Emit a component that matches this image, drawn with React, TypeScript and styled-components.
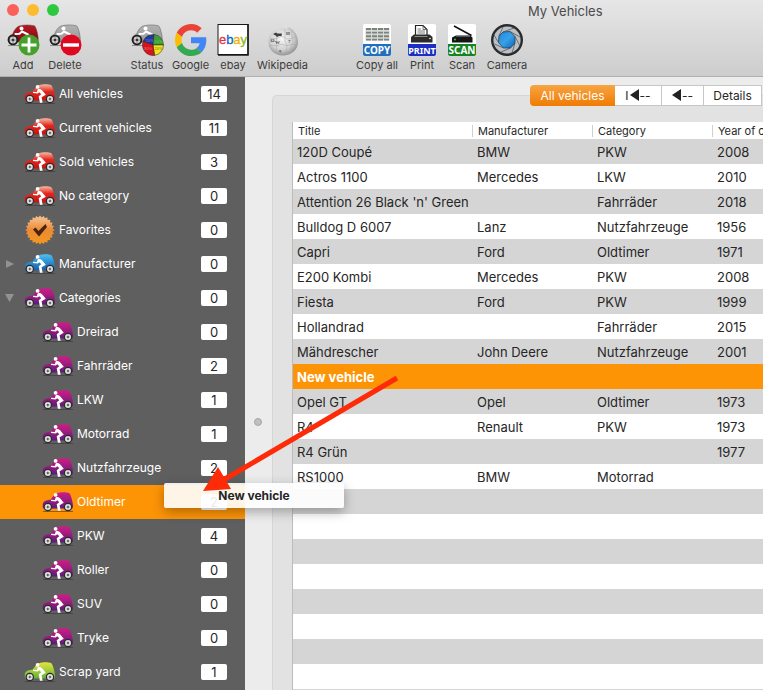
import React from "react";
import styled, { createGlobalStyle, css } from "styled-components";

const GlobalStyle = createGlobalStyle`
  * { box-sizing: border-box; }
  body {
    margin: 0;
    background: #ececec;
    font-family: Inter, "Liberation Sans", sans-serif;
    font-size: 13px;
    color: #262626;
  }
  button { font: inherit; color: inherit; background: none; border: 0; padding: 0; }
`;

const Window = styled.div`
  position: relative;
  display: flex;
  flex-direction: column;
  height: 100vh;
  overflow: hidden;
`;

const Header = styled.header`
  flex: none;
  background: linear-gradient(#e6e6e6, #cdcdcd);
  border-bottom: 1px solid #b0b0b0;
`;

const TitleBar = styled.div`
  position: relative;
  display: flex;
  align-items: center;
  height: 22px;
  padding-left: 7px;
  gap: 8px;
`;

const Light = styled.button<{ $color: string }>`
  width: 12px;
  height: 12px;
  margin-bottom: 2px;
  border-radius: 50%;
  background: ${(p) => p.$color};
`;

const WindowTitle = styled.h1`
  flex: 1;
  margin: 0 0 0 461px;
  font-size: 13px;
  font-weight: 400;
  color: #4b4b4b;
  white-space: nowrap;
`;

const Toolbar = styled.div`
  display: flex;
  height: 54px;
  padding: 2px 6px 0;
  gap: 48px;
`;

const ToolGroup = styled.div`
  display: flex;
  gap: 8px;
`;

const ToolButton = styled.button<{ $width: number }>`
  display: flex;
  flex-direction: column;
  align-items: center;
  gap: 2px;
  width: ${(p) => p.$width}px;
  font-size: 11px;
  line-height: 15px;
  color: #3c3c3c;
  white-space: nowrap;
  svg { flex: none; }
`;

const Body = styled.div`
  display: flex;
  flex: 1;
  min-height: 0;
`;

const Sidebar = styled.nav`
  flex: none;
  width: 245px;
  background: #5f5f5f;
  overflow: hidden;
`;

const SideList = styled.ul`
  list-style: none;
  margin: 0;
  padding: 0;
`;

const SideItem = styled.button<{ $child?: boolean; $selected?: boolean }>`
  display: flex;
  align-items: center;
  width: 100%;
  height: 34px;
  padding-right: 18px;
  padding-left: ${(p) => (p.$child ? 23 : 5)}px;
  color: #fff;
  background: ${(p) => (p.$selected ? "#fd9406" : "transparent")};
`;

const Disclosure = styled.span`
  display: flex;
  width: 19px;
`;

const SideLabel = styled.span`
  flex: 1;
  padding: 0 0 2px 3px;
  font-size: 12px;
  text-align: left;
  white-space: nowrap;
`;

const Count = styled.span`
  width: 26px;
  border-radius: 2px;
  background: #fff;
  color: #262626;
  font-size: 13px;
  line-height: 16px;
  text-align: center;
`;

const Splitter = styled.div`
  flex: none;
  width: 27px;
  padding: 341px 0 0 9px;
  &::before {
    content: "";
    display: block;
    width: 6px;
    height: 6px;
    border-radius: 50%;
    border: 1px solid #a6a6a6;
    background: #bfbfbf;
  }
`;

const Main = styled.main`
  flex: 1;
  min-width: 0;
  padding-top: 18px;
`;

const Panel = styled.section`
  height: 100%;
  border: solid #d6d6d6;
  border-width: 1px 0 0 1px;
  border-radius: 5px 0 0 0;
  background: #e2e2e2;
  padding-left: 19px;
`;

const Tabs = styled.div`
  display: flex;
  height: 21px;
  margin: -11px 0 16px 238px;
  overflow: hidden;
  border-radius: 4px 0 0 4px;
`;

const Tab = styled.button<{ $active?: boolean; $width: number }>`
  flex: none;
  display: flex;
  align-items: center;
  justify-content: center;
  gap: 1px;
  width: ${(p) => p.$width}px;
  padding-bottom: 1px;
  font-size: 12px;
  background: #fff;
  border: solid #c6c6c6;
  border-width: 1px 1px 1px 0;
  white-space: nowrap;
  ${(p) =>
    p.$active &&
    css`
      color: #fff;
      border: 0;
      background: linear-gradient(#f7a544, #ef7b02);
    `}
`;

const Table = styled.table`
  width: 100%;
  table-layout: fixed;
  border-collapse: separate;
  border-spacing: 0;
  border-left: 1px solid #bcbcbc;
  th, td {
    padding: 0 0 0 4px;
    text-align: left;
    white-space: nowrap;
    overflow: hidden;
  }
`;

const HeadCell = styled.th<{ $width?: number }>`
  width: ${(p) => (p.$width ? `${p.$width}px` : "auto")};
  height: 17px;
  background: #fff;
  font-size: 11px;
  font-weight: 400;
  line-height: 17px;
`;

const HeadText = styled.span<{ $divided: boolean }>`
  display: block;
  line-height: 12px;
  padding-left: 1px;
  border-right: ${(p) => (p.$divided ? "1px solid #d0d0d0" : "0")};
`;

const Row = styled.tr<{ $selected?: boolean }>`
  height: 25px;
  background: #fff;
  &:nth-child(odd) { background: #d5d5d5; }
  && {
    ${(p) =>
      p.$selected &&
      css`
        background: #fd9406;
        color: #fff;
        font-weight: 700;
      `}
  }
`;

const DragLabel = styled.div`
  position: absolute;
  left: 164px;
  top: 483px;
  width: 180px;
  border-radius: 2px;
  background: rgba(255, 255, 255, 0.9);
  box-shadow: 0 4px 12px rgba(0, 0, 0, 0.3);
  font-size: 12px;
  font-weight: 700;
  line-height: 25px;
  text-align: center;
`;

const Arrow = styled.svg`
  position: absolute;
  left: 200px;
  top: 370px;
  pointer-events: none;
`;

type Paint = "red" | "blue" | "purple" | "green" | "darkred" | "gray";
const paints: Record<Paint, [string, string, string]> = {
  red: ["#f9b9a0", "#e2281f", "#c41212"],
  blue: ["#4fc0f0", "#2b93d6", "#1b5ba3"],
  purple: ["#d01c86", "#a01d7f", "#5a1b7a"],
  green: ["#e6e43a", "#a9cf3c", "#62b132"],
  darkred: ["#b81722", "#a3101c", "#790a13"],
  gray: ["#b2b2b2", "#a6a6a6", "#989898"],
};

const PaintFill = ({ paint }: { paint: Paint }) => (
  <defs>
    <linearGradient id={`car-${paint}`} x1="0" y1="0" x2="0" y2="1">
      <stop offset="0" stopColor={paints[paint][0]} />
      <stop offset=".45" stopColor={paints[paint][1]} />
      <stop offset="1" stopColor={paints[paint][2]} />
    </linearGradient>
  </defs>
);

const Wheel = ({ x }: { x: number }) => (
  <g>
    <circle cx={x} cy="16" r="4.2" fill="#2b2b2b" />
    <circle cx={x} cy="16" r="3" fill="#e9e9e9" />
    <path d={`M${x - 2.6} 16h5.200M${x} 13.400v5.200`} stroke="#8d8d8d" strokeWidth=".6" />
    <circle cx={x} cy="16" r="1" fill="#555" />
  </g>
);

const CarIcon = ({ paint }: { paint: Paint }) => (
  <svg width="32" height="22" viewBox="0 0 32 22" aria-hidden="true">
    <PaintFill paint={paint} />
    <path d="M1 20.500H31" stroke="#333" strokeWidth=".8" opacity=".7" />
    <path
      d="M.8 16C.3 12.500 1.200 10.600 4 9.600L8.800 8.400C10.500 5.500 12.500 3.200 15 2.200C18.500 1 24.500 1 27 2C28.600 2.800 30.200 8.500 30.900 13.500C31.200 16 30.800 17.500 29.800 17.500H2.500C1.500 17.500 .9 17 .8 16Z"
      fill={`url(#car-${paint})`}
    />
    <Wheel x={5.8} />
    <Wheel x={26} />
    <circle cx="13.600" cy="3.900" r="1.900" fill="#fff" />
    <path d="M13.800 6.300C15.500 5.600 17.200 6.300 18.500 7.800L21.800 11.700L17.600 14.200L18.600 19.700H15.900L14.700 13.200L17.300 11.300L15.300 9.300L13.600 10.500L9 10V8.800L12.800 8.900Z" fill="#fff" />
  </svg>
);

const SealIcon = () => {
  const points = Array.from({ length: 48 }, (_, i) => {
    const r = i % 2 ? 12.6 : 14.6;
    const a = (i * Math.PI) / 24;
    return `${16 + r * Math.sin(a)},${15 - r * Math.cos(a)}`;
  }).join(" ");
  return (
    <svg width="32" height="30" viewBox="0 0 32 30" aria-hidden="true">
      <defs>
        <linearGradient id="seal" x1="0" y1="0" x2="0" y2="1">
          <stop offset="0" stopColor="#f9c79a" />
          <stop offset=".5" stopColor="#e98b36" />
          <stop offset="1" stopColor="#f4981f" />
        </linearGradient>
      </defs>
      <polygon points={points} fill="url(#seal)" />
      <path d="M9 14.500L11.500 12.500L14.500 16L21.500 9L23 12L15 21.500Z" fill="#4b2410" />
    </svg>
  );
};

const BadgedCar = ({ paint, children }: { paint: Paint; children: React.ReactNode }) => (
  <svg width="34" height="32" viewBox="0 0 34 32" aria-hidden="true">
    <PaintFill paint={paint} />
    <path d="M2 21.500H20" stroke="#777" strokeWidth=".8" />
    <path
      d="M2 15C2.300 12.500 4 11 6.500 10.300C8 6.500 10 3.200 13 2C18 .6 24 .6 28.500 1.800C30 3 31.800 9 32.200 14C32.400 17 32 18 30.500 18H4C2.500 18 1.800 17 2 15Z"
      fill={`url(#car-${paint})`}
      stroke="#555"
      strokeWidth=".5"
    />
    <circle cx="7" cy="16" r="5.300" fill="#1e1e1e" />
    <circle cx="7" cy="16" r="3.400" fill="#cfcfcf" />
    <path d="M4 16h6M7 13v6" stroke="#777" strokeWidth=".6" />
    <circle cx="7" cy="16" r="1.300" fill="#333" />
    <circle cx="15.500" cy="4.500" r="2" fill="#fff" />
    <path d="M16 7.500L22 10.500M16 7.500L13.500 9.800L9.500 10" fill="none" stroke="#fff" strokeWidth="2" strokeLinecap="round" strokeLinejoin="round" />
    {children}
  </svg>
);

const AddIcon = () => (
  <BadgedCar paint="darkred">
    <circle cx="23" cy="21" r="10.500" fill="#45a12b" />
    <path d="M23 13.500V28.500M15.500 21H30.500" stroke="#fff" strokeWidth="2.800" />
  </BadgedCar>
);

const DeleteIcon = () => (
  <BadgedCar paint="gray">
    <circle cx="23" cy="21" r="10.500" fill="#e00720" />
    <path d="M15 21H31" stroke="#fff" strokeWidth="3.400" />
  </BadgedCar>
);

const StatusIcon = () => (
  <BadgedCar paint="gray">
    <g stroke="#222" strokeWidth=".5">
      <path d="M23 21L13.200 17.200A10.500 10.500 0 0 1 24 10.500Z" fill="#2137a0" />
      <path d="M23 21L24 10.500A10.500 10.500 0 0 1 33.500 21Z" fill="#3f9d35" />
      <path d="M23 21H33.500A10.500 10.500 0 0 1 24.500 31.400Z" fill="#f5e51b" />
      <path d="M23 21L24.500 31.400A10.500 10.500 0 0 1 13.200 17.200Z" fill="#d7141e" />
    </g>
    <g fontSize="4" fontFamily="Liberation Sans">
      <text x="15.500" y="17.500" fill="#7088e2">20%</text>
      <text x="24.500" y="18.500" fill="#70c764">10%</text>
      <text x="14" y="26" fill="#ef7a7a">30%</text>
      <text x="24.500" y="26" fill="#777018">20%</text>
    </g>
  </BadgedCar>
);

const GoogleIcon = () => (
  <svg width="32" height="32" viewBox="0 0 48 48" aria-hidden="true">
    <path fill="#ea4335" d="M24 9.500c3.540 0 6.710 1.220 9.210 3.600l6.850-6.850C35.900 2.380 30.470 0 24 0 14.620 0 6.510 5.380 2.560 13.220l7.980 6.190C12.430 13.720 17.740 9.500 24 9.500z" />
    <path fill="#4285f4" d="M46.980 24.550c0-1.570-.15-3.090-.38-4.550H24v9.020h12.940c-.58 2.960-2.260 5.480-4.780 7.180l7.730 6c4.510-4.180 7.090-10.360 7.090-17.650z" />
    <path fill="#fbbc05" d="M10.530 28.590c-.48-1.450-.76-2.990-.76-4.590s.27-3.140.76-4.590l-7.980-6.190C.92 16.460 0 20.120 0 24s.92 7.540 2.560 10.780l7.970-6.190z" />
    <path fill="#34a853" d="M24 48c6.480 0 11.930-2.130 15.890-5.810l-7.730-6c-2.150 1.450-4.920 2.300-8.160 2.300-6.260 0-11.570-4.220-13.470-9.910l-7.980 6.190C6.510 42.620 14.620 48 24 48z" />
  </svg>
);

const EbayIcon = () => (
  <svg width="32" height="32" viewBox="0 0 32 32" aria-hidden="true">
    <rect x="1" y=".5" width="30" height="30" fill="#fff" stroke="#191919" />
    <path d="M31 0V31H1" fill="none" stroke="#191919" strokeWidth="1.500" />
    <text x="16" y="20" textAnchor="middle" fontFamily="Liberation Sans" fontSize="13">
      <tspan fill="#e53238" stroke="#e53238" strokeWidth=".3">e</tspan>
      <tspan fill="#0064d2" stroke="#0064d2" strokeWidth=".3">b</tspan>
      <tspan fill="#f5af02" stroke="#f5af02" strokeWidth=".3">a</tspan>
      <tspan fill="#86b817" stroke="#86b817" strokeWidth=".3">y</tspan>
    </text>
  </svg>
);

const WikipediaIcon = () => (
  <svg width="32" height="32" viewBox="0 0 32 32" aria-hidden="true">
    <defs>
      <radialGradient id="globe" cx=".45" cy=".4" r=".65">
        <stop offset="0" stopColor="#f6f6f6" />
        <stop offset=".6" stopColor="#d2d2d2" />
        <stop offset="1" stopColor="#858585" />
      </radialGradient>
    </defs>
    <path d="M5.500 8L9 5.500L12 6.500L14 4L18 5.500L22 3.500C27 6 31 11 31 18C31 26 24 31.500 16 31.500C7 31.500 1 25 1.500 17C1.700 13 3 10 5.500 8Z" fill="url(#globe)" />
    <path d="M6 10L9 8.500L10.500 9.500H15L14.500 12H12L10 13L8.500 11.500Z" fill="#3f3f3f" />
    <path d="M3 15C6 13 9 16 11 14S16 12 18 14S25 15 29 12M2 22C6 20 9 23 12 21S19 23 22 21S28 22 30 20M10 13C8 18 11 22 9 29M17 5C20 9 16 14 19 19S17 26 20 31M25 6C23 11 28 15 25 20S26 26 24 29" fill="none" stroke="#a5a5a5" strokeWidth=".5" />
    <g fontFamily="Liberation Serif" fontSize="5" fontWeight="700" fill="#555">
      <text x="8" y="20">W</text>
      <text x="19" y="11">И</text>
      <text x="3.500" y="18">Ω</text>
      <text x="21" y="19">7</text>
      <text x="12" y="28">ę</text>
    </g>
  </svg>
);

const LabelTile = ({ text, color, children }: { text: string; color: string; children: React.ReactNode }) => (
  <svg width="32" height="32" viewBox="0 0 32 32" aria-hidden="true">
    <rect x="2" y="0" width="28" height="32" rx="2" fill="#fff" />
    {children}
    <path d="M2 20H30V30A2 2 0 0 1 28 32H4A2 2 0 0 1 2 30Z" fill={color} />
    <text x="16" y="29.500" textAnchor="middle" fill="#fff" fontFamily="Noto Sans" fontWeight="700" fontSize={text.length > 4 ? 9 : 10}>{text}</text>
  </svg>
);

const CopyIcon = () => (
  <LabelTile text="COPY" color="#2170c0">
    <path d="M4.500 4h24v12.500h-24z" fill="#d5dad4" />
    {[5, 8.6, 12.2, 15.6].map((y) => (
      <path key={y} d={`M5 ${y}h5m1 0h5m1 0h5m1 0h5`} stroke="#7c827c" strokeWidth="1.900" />
    ))}
  </LabelTile>
);

const PrintIcon = () => (
  <LabelTile text="PRINT" color="#1b2fc4">
    <path d="M9.500 11V1.500H17L21 5.500V11" fill="#fff" stroke="#222" strokeWidth="1.200" />
    <path d="M17 1.500V5.500H21M11.500 5H15M11.500 7H19M11.500 9H19" fill="none" stroke="#555" strokeWidth=".8" />
    <path d="M8 10.500H23.500L26.500 13V18.500H5V13Z" fill="#2b2b2b" />
    <path d="M8.500 12.500H21.500" stroke="#8c8c8c" />
    <circle cx="24" cy="14.500" r=".8" fill="#fff" />
  </LabelTile>
);

const ScanIcon = () => (
  <LabelTile text="SCAN" color="#168322">
    <path d="M8 2L25.500 11.500" stroke="#111" strokeWidth="1.500" />
    <path d="M10 11.500H24L26.500 13.500V18.500H6V13.500Z" fill="#151515" />
    <path d="M10 12.500H24" stroke="#666" strokeWidth=".8" />
    <circle cx="9" cy="15.500" r=".9" fill="#46c658" />
  </LabelTile>
);

const CameraIcon = () => (
  <svg width="32" height="32" viewBox="0 0 32 32" aria-hidden="true">
    <defs>
      <linearGradient id="lens" x1="0" y1="0" x2="1" y2="1">
        <stop offset="0" stopColor="#1e86d8" />
        <stop offset=".5" stopColor="#38a1eb" />
        <stop offset="1" stopColor="#0965b7" />
      </linearGradient>
    </defs>
    <circle cx="16" cy="16" r="14.800" fill="#bcc0c5" stroke="#292b2d" strokeWidth="2.400" />
    <polygon points="12,8 19,7.500 24,12.500 24,19 19.500,24 12.500,24 7.500,18.500 8,12" fill="url(#lens)" stroke="#25394a" strokeWidth=".8" />
    <path d="M12 8L23 4M19 7.500L29 13M24 12.500L29 22M24 19L21 29M19.500 24L10 28M12.500 24L3.500 20M7.500 18.500L3 11M8 12L12 3" stroke="#454b52" strokeWidth=".7" />
  </svg>
);

const toolGroups = [
  [
    { label: "Add", width: 34, Icon: AddIcon },
    { label: "Delete", width: 34, Icon: DeleteIcon },
  ],
  [
    { label: "Status", width: 34, Icon: StatusIcon },
    { label: "Google", width: 37, Icon: GoogleIcon },
    { label: "ebay", width: 32, Icon: EbayIcon },
    { label: "Wikipedia", width: 51, Icon: WikipediaIcon },
  ],
  [
    { label: "Copy all", width: 42, Icon: CopyIcon },
    { label: "Print", width: 32, Icon: PrintIcon },
    { label: "Scan", width: 32, Icon: ScanIcon },
    { label: "Camera", width: 42, Icon: CameraIcon },
  ],
];

type SideEntry = { label: string; count: number; paint?: Paint; child?: boolean; open?: boolean };
const sideEntries: SideEntry[] = [
  { label: "All vehicles", count: 14, paint: "red" },
  { label: "Current vehicles", count: 11, paint: "red" },
  { label: "Sold vehicles", count: 3, paint: "red" },
  { label: "No category", count: 0, paint: "red" },
  { label: "Favorites", count: 0 },
  { label: "Manufacturer", count: 0, paint: "blue", open: false },
  { label: "Categories", count: 0, paint: "purple", open: true },
  { label: "Dreirad", count: 0, paint: "purple", child: true },
  { label: "Fahrräder", count: 2, paint: "purple", child: true },
  { label: "LKW", count: 1, paint: "purple", child: true },
  { label: "Motorrad", count: 1, paint: "purple", child: true },
  { label: "Nutzfahrzeuge", count: 2, paint: "purple", child: true },
  { label: "Oldtimer", count: 2, paint: "purple", child: true },
  { label: "PKW", count: 4, paint: "purple", child: true },
  { label: "Roller", count: 0, paint: "purple", child: true },
  { label: "SUV", count: 0, paint: "purple", child: true },
  { label: "Tryke", count: 0, paint: "purple", child: true },
  { label: "Scrap yard", count: 1, paint: "green" },
];

const columns = [
  { label: "Title", width: 180 },
  { label: "Manufacturer", width: 120 },
  { label: "Category", width: 120 },
  { label: "Year of construction" },
];

const vehicles = [
  ["120D Coupé", "BMW", "PKW", "2008"],
  ["Actros 1100", "Mercedes", "LKW", "2010"],
  ["Attention 26 Black 'n' Green", "", "Fahrräder", "2018"],
  ["Bulldog D 6007", "Lanz", "Nutzfahrzeuge", "1956"],
  ["Capri", "Ford", "Oldtimer", "1971"],
  ["E200 Kombi", "Mercedes", "PKW", "2008"],
  ["Fiesta", "Ford", "PKW", "1999"],
  ["Hollandrad", "", "Fahrräder", "2015"],
  ["Mähdrescher", "John Deere", "Nutzfahrzeuge", "2001"],
  ["New vehicle", "", "", ""],
  ["Opel GT", "Opel", "Oldtimer", "1973"],
  ["R4", "Renault", "PKW", "1973"],
  ["R4 Grün", "", "", "1977"],
  ["RS1000", "BMW", "Motorrad", ""],
  ...Array.from({ length: 9 }, () => ["", "", "", ""]),
];

const BackTriangle = () => (
  <svg width="9" height="12" viewBox="0 0 9 12" aria-hidden="true">
    <path d="M9 0V12L0 6Z" fill="#222" />
  </svg>
);

export default function App() {
  return (
    <Window>
      <GlobalStyle />
      <Header>
        <TitleBar>
          <Light $color="#fc605b" aria-label="Close" />
          <Light $color="#fdbc2f" aria-label="Minimize" />
          <Light $color="#2dc840" aria-label="Zoom" />
          <WindowTitle>My Vehicles</WindowTitle>
        </TitleBar>
        <Toolbar>
          {toolGroups.map((group, i) => (
            <ToolGroup key={i}>
              {group.map(({ label, width, Icon }) => (
                <ToolButton key={label} $width={width}>
                  <Icon />
                  {label}
                </ToolButton>
              ))}
            </ToolGroup>
          ))}
        </Toolbar>
      </Header>
      <Body>
        <Sidebar>
          <SideList>
            {sideEntries.map(({ label, count, paint, child, open }) => (
              <li key={label}>
                <SideItem $child={child} $selected={label === "Oldtimer"} aria-expanded={open}>
                  <Disclosure>
                    {open !== undefined && (
                      <svg width="9" height="8" viewBox="0 0 9 8" aria-hidden="true">
                        <path d={open ? "M0 0H9L4.500 8Z" : "M1 0L9 4L1 8Z"} fill="#929292" />
                      </svg>
                    )}
                  </Disclosure>
                  {paint ? <CarIcon paint={paint} /> : <SealIcon />}
                  <SideLabel>{label}</SideLabel>
                  <Count>{count}</Count>
                </SideItem>
              </li>
            ))}
          </SideList>
        </Sidebar>
        <Splitter />
        <Main>
          <Panel>
            <Tabs>
              <Tab $active $width={85}>All vehicles</Tab>
              <Tab $width={47} aria-label="First">I<BackTriangle />--</Tab>
              <Tab $width={42} aria-label="Previous"><BackTriangle />--</Tab>
              <Tab $width={58}>Details</Tab>
            </Tabs>
            <Table>
              <thead>
                <tr>
                  {columns.map(({ label, width }) => (
                    <HeadCell key={label} $width={width}>
                      <HeadText $divided={width !== undefined}>{label}</HeadText>
                    </HeadCell>
                  ))}
                </tr>
              </thead>
              <tbody>
                {vehicles.map((cells, i) => (
                  <Row key={i} $selected={cells[0] === "New vehicle"}>
                    {cells.map((cell, j) => (
                      <td key={j}>{cell}</td>
                    ))}
                  </Row>
                ))}
              </tbody>
            </Table>
          </Panel>
        </Main>
      </Body>
      <DragLabel>New vehicle</DragLabel>
      <Arrow width="200" height="125" viewBox="0 0 200 125" aria-hidden="true">
        <path d="M197 8L20 112" stroke="#fd2b08" strokeWidth="5" />
        <path d="M3 121L18 97L31 119Z" fill="#fd2b08" />
      </Arrow>
    </Window>
  );
}
